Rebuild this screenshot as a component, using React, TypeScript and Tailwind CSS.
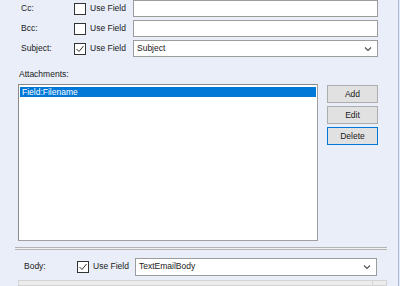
const font = { fontFamily: '"Liberation Sans", Arial, sans-serif' };

function Check({ on }: { on?: boolean }) {
  return (
    <div className="w-[12px] h-[12px] border border-[#333333] bg-white flex items-center justify-center shrink-0">
      {on && (
        <svg width="10" height="10" viewBox="0 0 10 10">
          <path d="M1.5 5 L4 7.5 L8.5 2" fill="none" stroke="#333333" strokeWidth="1" />
        </svg>
      )}
    </div>
  );
}

function Chevron() {
  return (
    <svg width="8" height="6" viewBox="0 0 8 6" className="shrink-0">
      <path d="M1 1.5 L4 4.5 L7 1.5" fill="none" stroke="#555555" strokeWidth="1.2" />
    </svg>
  );
}

function FieldRow({ label, on, value, combo }: { label: string; on?: boolean; value?: string; combo?: boolean }) {
  return (
    <div className="flex items-center h-[17px]">
      <div className="w-[74px] pl-[21px] text-[8.5px] text-[#1a1a1a]">{label}</div>
      <Check on={on} />
      <div className="w-[47px] pl-[4px] text-[8.5px] text-[#1a1a1a]">Use Field</div>
      <div className="w-[245px] h-[17px] border border-[#9c9c9c] bg-white flex items-center justify-between pl-[3px] pr-[5px] text-[8.5px] text-[#1a1a1a]">
        <span>{value}</span>
        {combo && <Chevron />}
      </div>
    </div>
  );
}

function Btn({ label, focus }: { label: string; focus?: boolean }) {
  return (
    <div
      className={`w-[51px] h-[18px] bg-[#e1e1e1] border flex items-center justify-center text-[8.5px] text-[#1a1a1a] ${
        focus ? 'border-[#0078d7]' : 'border-[#adadad]'
      }`}
    >
      {label}
    </div>
  );
}

export default function App() {
  return (
    <div className="w-[400px] h-[286px] overflow-hidden bg-[#e9eef9] flex" style={font}>
      <div className="w-[398px] flex flex-col">
        <div className="flex flex-col gap-[3px] pt-0">
          <FieldRow label="Cc:" />
          <FieldRow label="Bcc:" />
          <FieldRow label="Subject:" on value="Subject" combo />
        </div>

        <div className="pl-[19px] mt-[12px] text-[8.5px] text-[#1a1a1a] leading-[11px]">Attachments:</div>

        <div className="flex mt-[4px] pl-[18px]">
          <div className="w-[300px] h-[157px] bg-white border border-[#a0a0a0] border-l-[#8a8a8a] border-t-[#8a8a8a] pt-[2px] px-[1px]">
            <div className="h-[10px] bg-[#0078d7] text-white text-[8.5px] leading-[10px] pl-[2px]">Field:Filename</div>
          </div>
          <div className="flex flex-col gap-[3px] ml-[9px] mt-[1px]">
            <Btn label="Add" />
            <Btn label="Edit" />
            <Btn label="Delete" focus />
          </div>
        </div>

        <div className="ml-[15px] w-[372px] mt-[6px] h-[3px] border-t border-b border-[#b4b4b4] bg-[#f2f2f2]" />

        <div className="flex items-center h-[18px] mt-[8px]">
          <div className="w-[77px] pl-[24px] text-[8.5px] text-[#1a1a1a]">Body:</div>
          <Check on />
          <div className="w-[46px] pl-[4px] text-[8.5px] text-[#1a1a1a]">Use Field</div>
          <div className="w-[242px] h-[18px] border border-[#9c9c9c] bg-white flex items-center justify-between pl-[3px] pr-[5px] text-[8.5px] text-[#1a1a1a]">
            <span>TextEmailBody</span>
            <Chevron />
          </div>
        </div>

        <div className="ml-[18px] w-[369px] mt-[4px] h-[10px] bg-[#ececec] border border-[#d4d4d4] flex justify-end">
          <div className="w-[14px] h-full border-l border-[#d4d4d4]" />
        </div>
      </div>
      <div className="w-[1px] h-full bg-[#a6b8e0]" />
      <div className="w-[1px] h-full bg-[#e4eaf6]" />
    </div>
  );
}
